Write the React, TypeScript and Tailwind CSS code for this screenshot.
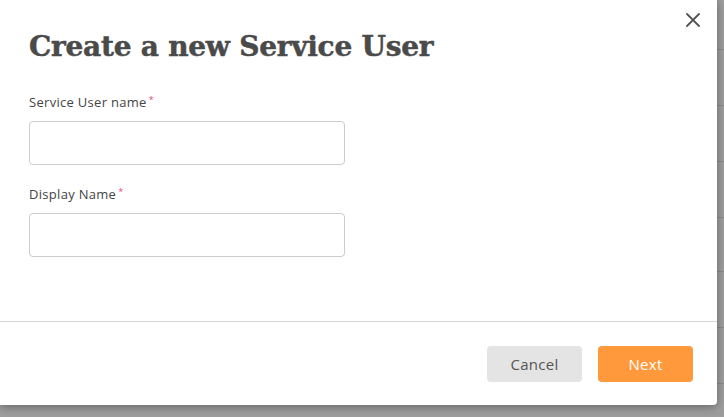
import React from "react";

export default function App() {
  const rows = [50, 56, 56, 56, 54, 56, 56];
  return (
    <div className="relative w-[724px] h-[417px] overflow-hidden bg-[#9d9d9d]" style={{ fontFamily: "'Open Sans', Lato, sans-serif" }}>
      <div className="flex flex-col">
        {rows.map((h, i) => (
          <div key={i} className="border-b border-[#8a8a8a]" style={{ height: h }} />
        ))}
      </div>
      <div className="absolute left-0 top-0 w-[717px] h-[405px] bg-white rounded-br-[4px] shadow-[0_2px_10px_rgba(0,0,0,0.35)] flex flex-col">
        <button className="absolute right-[16px] top-[12px] w-[16px] h-[16px] flex items-center justify-center text-[#555]">
          <svg width="14" height="14" viewBox="0 0 14 14" fill="none" stroke="#555" strokeWidth="1.8" strokeLinecap="round">
            <path d="M1 1L13 13M13 1L1 13" />
          </svg>
        </button>
        <div className="flex-1 px-[29px] pt-[28px]">
          <h1 className="text-[#4a4a4a] font-bold text-[28px] leading-[38px] tracking-[-0.25px]" style={{ fontFamily: "'DejaVu Serif', serif", WebkitTextStroke: "0.5px #4a4a4a" }}>
            Create a new Service User
          </h1>
          <div className="mt-[27px] flex flex-col">
            <label className="text-[13px] leading-[18px] text-[#444] tracking-[0.3px]">
              Service User name<span className="text-[#e8497a] text-[9px] relative top-[-4px] ml-[2px]">*</span>
            </label>
            <input className="mt-[8px] w-[316px] h-[44px] border border-[#cccccc] rounded-[4px] outline-none" />
            <label className="mt-[20px] text-[13px] leading-[18px] text-[#444] tracking-[0.3px]">
              Display Name<span className="text-[#e8497a] text-[9px] relative top-[-4px] ml-[2px]">*</span>
            </label>
            <input className="mt-[8px] w-[316px] h-[44px] border border-[#cccccc] rounded-[4px] outline-none" />
          </div>
        </div>
        <div className="h-[84px] border-t border-[#d6d6d6] flex items-start justify-end gap-[16px] pt-[24px] pr-[24px]">
          <button className="w-[95px] h-[36px] rounded-[4px] bg-[#e4e4e4] text-[#555] text-[15px] tracking-[0.3px]">Cancel</button>
          <button className="w-[95px] h-[36px] rounded-[4px] bg-[#ff993b] text-white text-[15px] tracking-[0.3px]">Next</button>
        </div>
      </div>
    </div>
  );
}
